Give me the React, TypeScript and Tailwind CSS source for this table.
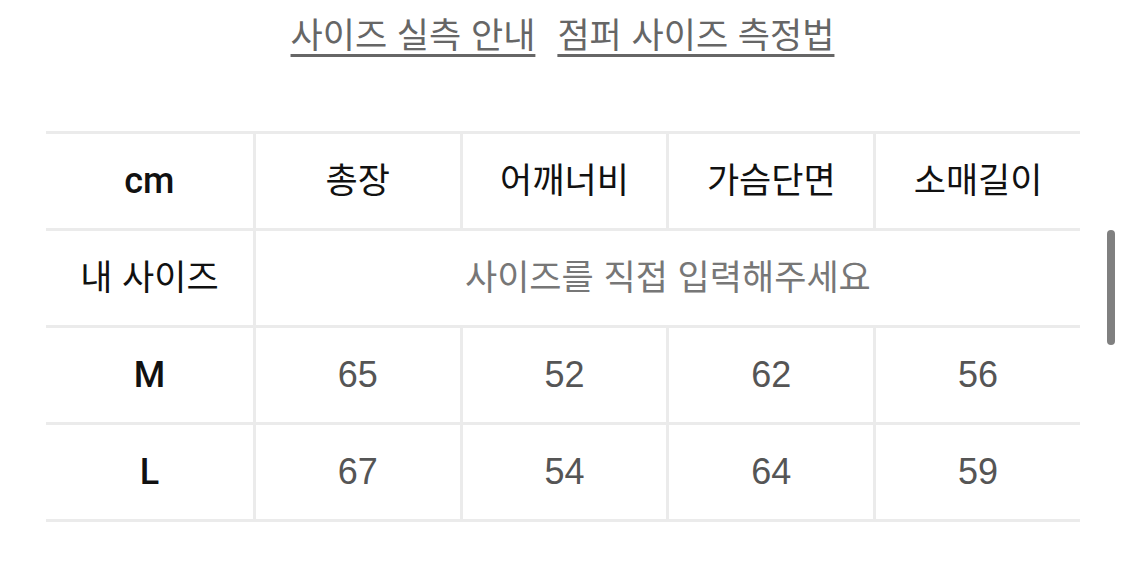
import React from "react";

const font = { fontFamily: '"Liberation Sans", "Noto Sans CJK KR", sans-serif' };
const latin = { fontFamily: 'Roboto, "Liberation Sans", sans-serif' };

const rows = [
  { size: "M", values: ["65", "52", "62", "56"] },
  { size: "L", values: ["67", "54", "64", "59"] },
];

const heads = ["총장", "어깨너비", "가슴단면", "소매길이"];

export default function App() {
  return (
    <div className="relative w-[1125px] h-[569px] bg-white overflow-hidden" style={font}>
      {/* links */}
      <div className="flex justify-center gap-[22px] pt-[14px] h-[131px]">
        <a className="text-[35px] leading-[44px] text-[#666] underline decoration-[3px] underline-offset-[6px]">사이즈 실측 안내</a>
        <a className="text-[35px] leading-[44px] text-[#666] underline decoration-[3px] underline-offset-[6px]">점퍼 사이즈 측정법</a>
      </div>

      {/* size table */}
      <div className="ml-[46px] w-[1034px] border-b-[3px] border-[#ebebeb]">
        <div className="grid grid-cols-5 h-[97px] border-t-[3px] border-[#ebebeb]">
          <div className="flex items-center justify-center text-[36px] text-[#111] font-medium" style={latin}>cm</div>
          {heads.map((h) => (
            <div key={h} className="flex items-center justify-center border-l-[3px] border-[#ebebeb] text-[35px] text-[#111]">
              {h}
            </div>
          ))}
        </div>
        <div className="grid grid-cols-5 h-[97px] border-t-[3px] border-[#ebebeb]">
          <div className="flex items-center justify-center text-[35px] text-[#111]">내 사이즈</div>
          <div className="col-span-4 flex items-center justify-center border-l-[3px] border-[#ebebeb] text-[35px] text-[#777]">
            사이즈를 직접 입력해주세요
          </div>
        </div>
        {rows.map((r) => (
          <div key={r.size} className="grid grid-cols-5 h-[97px] border-t-[3px] border-[#ebebeb]">
            <div className="flex items-center justify-center text-[36px] text-[#111] font-medium" style={latin}>{r.size}</div>
            {r.values.map((v, i) => (
              <div key={i} className="flex items-center justify-center border-l-[3px] border-[#ebebeb] text-[36px] text-[#555]">
                {v}
              </div>
            ))}
          </div>
        ))}
      </div>

      {/* scrollbar */}
      <div className="absolute left-[1107px] top-[230px] w-[8px] h-[115px] rounded-full bg-[#808080]" />
    </div>
  );
}
